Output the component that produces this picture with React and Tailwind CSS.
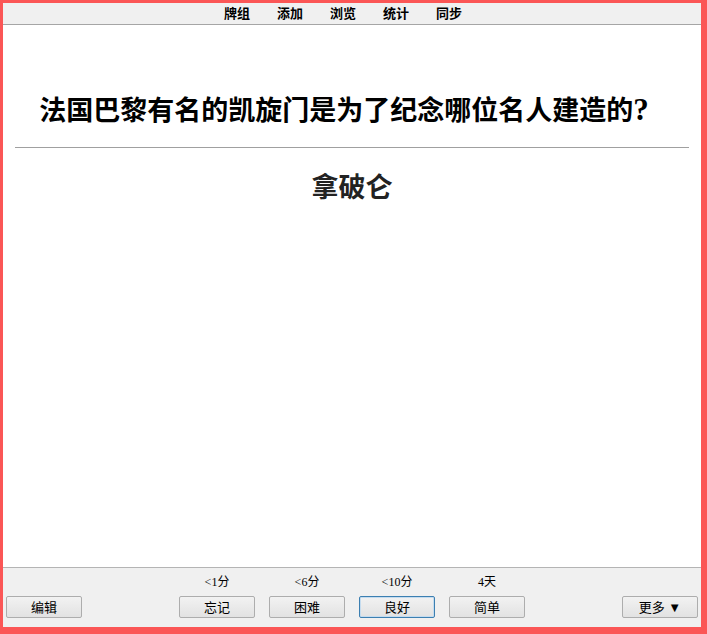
import React from "react";

const cjk = { fontFamily: '"Liberation Serif", "Noto Sans CJK SC", serif' };
const ui = { fontFamily: '"Liberation Sans", "Noto Sans CJK SC", sans-serif' };

const tabs = ["牌组", "添加", "浏览", "统计", "同步"];

const answers = [
  { label: "<1分", text: "忘记" },
  { label: "<6分", text: "困难" },
  { label: "<10分", text: "良好", focus: true },
  { label: "4天", text: "简单" },
];

// Classic desktop-style push button
const Btn = ({ children, focus }) => (
  <button
    className={
      "h-[22px] w-[76px] rounded-[2px] border bg-gradient-to-b from-[#f2f2f2] to-[#e2e2e2] text-[13px] leading-none text-black " +
      (focus ? "border-[#3c7fb1] shadow-[inset_0_0_0_1px_#c5dcef]" : "border-[#adadad]")
    }
    style={ui}
  >
    {children}
  </button>
);

export default function App() {
  return (
    <div className="flex h-[634px] w-[707px] flex-col border-t-[3px] border-r-[6px] border-b-[7px] border-l-[3px] border-[#fb5656] bg-white">
      {/* top menu */}
      <div className="flex h-[22px] shrink-0 items-center justify-center gap-[27px] border-b border-[#a5a5a5] bg-[#f0f0f0] pr-[18px]">
        {tabs.map((t) => (
          <span key={t} className="text-[13px] font-bold leading-none text-black" style={ui}>
            {t}
          </span>
        ))}
      </div>

      {/* card */}
      <div className="flex flex-1 flex-col px-[12px]">
        <div className="h-[32px] mt-[69px] pr-[16px] text-center text-[27px] font-bold leading-[32px] text-black" style={cjk}>
          法国巴黎有名的凯旋门是为了纪念哪位名人建造的<span className="text-[31px] leading-none">?</span>
        </div>
        <hr className="mt-[21px] border-t border-[#a0a0a0]" />
        <div className="pt-[24px] text-center text-[27px] font-bold leading-[32px] text-[#222]" style={cjk}>
          拿破仑
        </div>
      </div>

      {/* answer bar */}
      <div className="flex h-[60px] shrink-0 items-end justify-between border-t border-[#b4b4b4] bg-[#f0f0f0] px-[3px] pb-[9px]">
        <Btn>编辑</Btn>
        <div className="flex gap-[14px]">
          {answers.map((a) => (
            <div key={a.text} className="flex flex-col items-center gap-[7px]">
              <span className="text-[12px] leading-[14px] text-black" style={cjk}>
                {a.label}
              </span>
              <Btn focus={a.focus}>{a.text}</Btn>
            </div>
          ))}
        </div>
        <Btn>更多 ▼</Btn>
      </div>
    </div>
  );
}
